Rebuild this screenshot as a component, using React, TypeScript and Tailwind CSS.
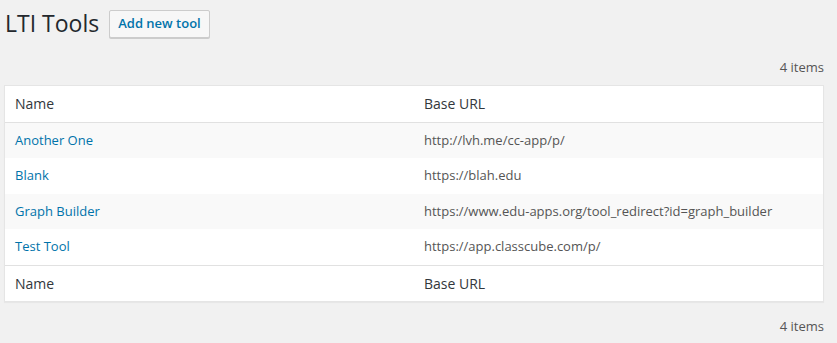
import React from 'react';

type Tool = { name: string; url: string };

const tools: Tool[] = [
  { name: 'Another One', url: 'http://lvh.me/cc-app/p/' },
  { name: 'Blank', url: 'https://blah.edu' },
  { name: 'Graph Builder', url: 'https://www.edu-apps.org/tool_redirect?id=graph_builder' },
  { name: 'Test Tool', url: 'https://app.classcube.com/p/' },
];

const font = { fontFamily: '"Open Sans", "Noto Sans", sans-serif' };

export default function App() {
  return (
    <div
      className="h-[343px] w-[837px] bg-[#f1f1f1] pl-[4px] pr-[13px] text-[#444]"
      style={font}
    >
      {/* Titulo */}
      <div className="flex items-center pt-[9px] pl-px">
        <h1 className="text-[23px] leading-[29px] font-normal text-[#23282d]">LTI Tools</h1>
        <button className="ml-[10px] h-[28px] px-[8px] border border-[#ccc] bg-[#f7f7f7] rounded-[2px] text-[13px] font-semibold text-[#0073aa] shadow-[0_1px_0_#ccc]">
          Add new tool
        </button>
      </div>

      {/* Contagem superior */}
      <div className="mt-[15px] mb-[2px] h-[30px] flex items-center justify-end text-[13px] text-[#555]">
        4 items
      </div>

      {/* Tabela */}
      <div className="w-[820px] bg-white border border-[#e5e5e5] shadow-[0_1px_1px_rgba(0,0,0,0.04)]">
        <div className="grid grid-cols-2 h-[36.5px] items-center border-b border-[#e1e1e1] text-[14px] text-[#32373c]">
          <div className="px-[10px]">Name</div>
          <div className="px-[10px]">Base URL</div>
        </div>
        {tools.map((t, i) => (
          <div
            key={t.name}
            className={
              'grid grid-cols-2 h-[35.5px] items-center text-[13px] ' +
              (i % 2 === 0 ? 'bg-[#f9f9f9]' : 'bg-white')
            }
          >
            <div className="px-[10px] text-[#0073aa]">{t.name}</div>
            <div className="px-[10px] text-[#555]">{t.url}</div>
          </div>
        ))}
        <div className="grid grid-cols-2 h-[36.5px] items-center border-t border-[#e1e1e1] text-[14px] text-[#32373c]">
          <div className="px-[10px]">Name</div>
          <div className="px-[10px]">Base URL</div>
        </div>
      </div>

      {/* Contagem inferior */}
      <div className="mt-[10px] h-[30px] flex items-center justify-end text-[13px] text-[#555]">
        4 items
      </div>
    </div>
  );
}
